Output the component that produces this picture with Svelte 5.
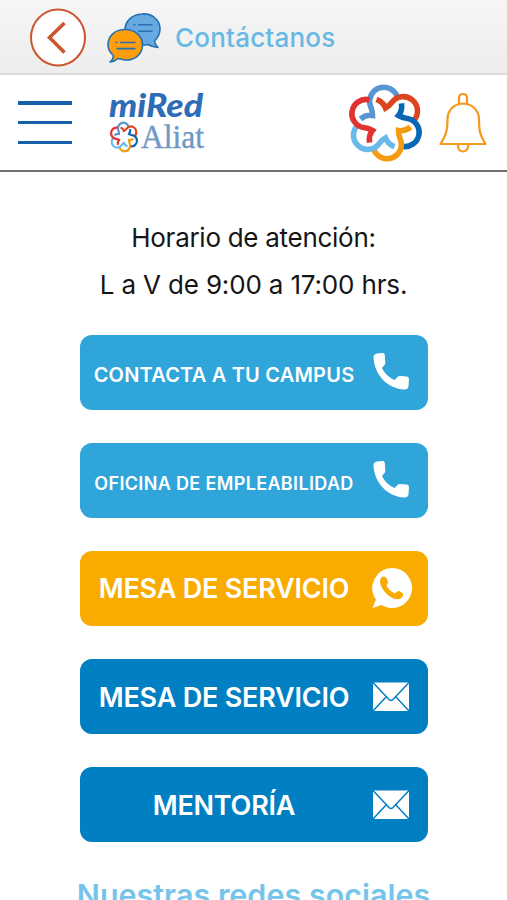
<script>
  const buttons = [
    { label: 'CONTACTA A TU CAMPUS', tone: 'sky', size: 'small', icon: 'phone' },
    { label: 'OFICINA DE EMPLEABILIDAD', tone: 'sky', size: 'tiny', icon: 'phone' },
    { label: 'MESA DE SERVICIO', tone: 'amber', size: 'large', icon: 'whatsapp' },
    { label: 'MESA DE SERVICIO', tone: 'blue', size: 'large', icon: 'mail' },
    { label: 'MENTORÍA', tone: 'blue', size: 'large', icon: 'mail' }
  ];
  const petals = ['#5796d2', '#dc4420', '#0867b5', '#f39c12', '#69b9eb', '#e0322f'];
</script>

{#snippet knot()}
  {#each petals as color, i}
    <path
      d="M57.500 19.500A14.200 14.200 0 1 0 31 29.500Q32.500 33 32.500 37.500Q26 36.500 20.500 41"
      transform="rotate({i * 60} 45.5 45)"
      fill="none"
      stroke={color}
      stroke-width="5.6"
    />
  {/each}
{/snippet}

<div class="screen">
  <div class="topbar">
    <svg class="back" width="58" height="60" viewBox="0 0 58 60">
      <ellipse cx="29" cy="29.500" rx="27" ry="28" fill="#fff" stroke="#cb5630" stroke-width="2" />
      <path d="M35.500 15L20.500 29.500L35.500 44.500" fill="none" stroke="#cb5630" stroke-width="3.6" />
    </svg>
    <svg class="chat" width="56" height="54" viewBox="0 0 56 54" stroke="#2470b3" stroke-width="1.6" stroke-linejoin="round">
      <path d="M35 4C45 3 53 10 53 19C53 24 50.500 28 47.500 31Q48 35 51 37.500Q45 37 41 34.500C29 37 18 30 18 20C18 11 25 4.500 35 4Z" fill="#68a9e2" />
      <path d="M26.500 14.700H28.500M31 14.700H45.500M31 21.200H45.500" fill="none" />
      <path d="M18 19.500C28 19.500 35.500 26 35.500 35C35.500 44 28 50.500 18 50L11 48.500Q8 51.500 3 52Q6.500 49 6.500 45.500C3 42.500 1 39 1 35C1 26 8 19.500 18 19.500Z" fill="#ff9d0a" />
      <path d="M8.500 32.500H10.500M13 32.500H28.500M9.500 38.600H28.500" fill="none" />
    </svg>
    <h1>Contáctanos</h1>
  </div>

  <header>
    <div class="menu"><i></i><i></i><i></i></div>
    <svg class="logo" width="100" height="66" viewBox="0 0 100 66">
      <text x="2" y="26.500" font-family="Lato, sans-serif" font-weight="900" font-style="italic" font-size="32" fill="#2e6db6" textLength="94" lengthAdjust="spacingAndGlyphs">miRed</text>
      <g transform="translate(-.5 29) scale(.385 .4)">{@render knot()}</g>
      <text x="34" y="58" font-family="Liberation Serif, serif" font-size="33" fill="#7199c5" stroke="#7199c5" stroke-width=".4" textLength="63" lengthAdjust="spacingAndGlyphs">Aliat</text>
    </svg>
    <svg class="knot" width="90" height="90" viewBox="0 0 90 90">{@render knot()}</svg>
    <svg class="bell" width="52" height="64" viewBox="0 0 52 64" fill="none" stroke="#f6981e" stroke-width="2.2" stroke-linejoin="round">
      <path d="M22 13V7Q22 3 26 3Q30 3 30 7V13" />
      <path d="M26 12.500C16 13 10.500 20 10.500 28C10.500 40 9 44 3.500 53H48.500C43 44 42 40 42 28C42 20 36 13 26 12.500Z" />
      <path d="M21 53.500V55.500Q21.500 60.500 26 60.500Q30.500 60.500 31 55.500V53.500" />
    </svg>
  </header>

  <main>
    <p class="hours">Horario de atención:</p>
    <p class="hours second">L a V de 9:00 a 17:00 hrs.</p>
    <div class="buttons">
      {#each buttons as b}
        <button class="{b.tone} {b.size}">
          <span>{b.label}</span>
          <svg width="42" height="42" viewBox="0 0 42 42">
            {#if b.icon === 'phone'}
              <path d="M6 2.500L12 2Q13.500 2 13.800 4L14.300 12Q14.300 13.500 13 14.500L11 17Q15 25.500 23.500 29L26.500 26Q27.500 25 29 25L36 25.500Q38 26 38 28L37.500 35.500Q37 38.500 33.500 38.500C17 38 3 24 2.500 6Q2.500 3 6 2.500Z" fill="#fff" />
            {:else if b.icon === 'whatsapp'}
              <path d="M21 1A20 20 0 1 1 10.500 38L1.500 41L5 32.500A20 20 0 0 1 21 1Z" fill="#fff" />
              <path d="M11 10Q13 9 15 10.500L17 14.500Q17.500 16 15.500 18.500Q18 24 24 26.500Q26 23.500 28 24L32 26.500Q32.500 30 29.500 31.500C24 34 17 29 13 24C9 18 7.500 13 11 10Z" fill="#f9ab00" />
            {:else}
              <path d="M2 6.500H38V35H2Z" fill="#fff" />
              <path d="M2 6.500L18 23.500Q20 25.500 22 23.500L38 6.500M2 35L15 21M38 35L25 21" fill="none" stroke="#0080c3" stroke-width="1.500" />
            {/if}
          </svg>
        </button>
      {/each}
    </div>
    <h2>Nuestras redes sociales</h2>
  </main>
</div>

<style>
  :global(body) { background: #fff; overflow: hidden; }
  .screen { width: 507px; height: 900px; overflow: hidden; background: #fff; font-family: Inter, sans-serif; }
  .topbar { box-sizing: border-box; height: 75px; display: flex; align-items: flex-start; background: linear-gradient(#f6f6f6, #ededed); border-bottom: 2px solid #dadada; }
  .back { margin: 8px 0 0 29px; flex: none; }
  .chat { margin: 10px 0 0 20px; flex: none; }
  h1 { margin: 22px 0 0 12px; font-size: 26px; line-height: 32px; font-weight: 500; letter-spacing: .2px; color: #67b8e5; white-space: nowrap; }
  header { box-sizing: border-box; height: 97px; display: flex; align-items: flex-start; border-bottom: 2px solid #717071; }
  .menu { width: 54px; height: 43px; margin: 26px 0 0 18px; display: flex; flex-direction: column; justify-content: space-between; flex: none; }
  .menu i { height: 3.500px; background: #1561ab; }
  .logo { margin: 15px 0 0 35px; flex: none; }
  .knot { margin: 3px 0 0 133px; flex: none; }
  .bell { margin: 16px 0 0 7px; flex: none; }
  main { display: flex; flex-direction: column; align-items: center; padding-top: 43px; }
  .hours { margin: 0; font-size: 26px; line-height: 46.500px; color: #151515; white-space: nowrap; letter-spacing: -.28px; }
  .second { letter-spacing: -.16px; }
  .buttons { display: flex; flex-direction: column; gap: 33.200px; margin-top: 26.500px; }
  button { box-sizing: border-box; width: 348px; height: 75px; padding: 0 15px 0 0; border: 0; border-radius: 12px; display: flex; align-items: center; font-family: inherit; font-weight: 600; color: #fff; }
  button span { flex: 1; text-align: center; white-space: nowrap; padding: 6px 2px 0 0; }
  button svg { flex: none; }
  .sky { background: #30a5da; }
  .amber { background: #f9ab00; }
  .blue { background: #0080c3; }
  .small { font-size: 20px; letter-spacing: .2px; }
  .tiny { font-size: 18px; letter-spacing: .35px; }
  .large { font-size: 27px; letter-spacing: -.22px; }
  .large span { padding-top: 1px; }
  h2 { margin: 36px 0 0; font-size: 30.500px; line-height: 34px; font-weight: 600; color: #77c4eb; white-space: nowrap; }
</style>
